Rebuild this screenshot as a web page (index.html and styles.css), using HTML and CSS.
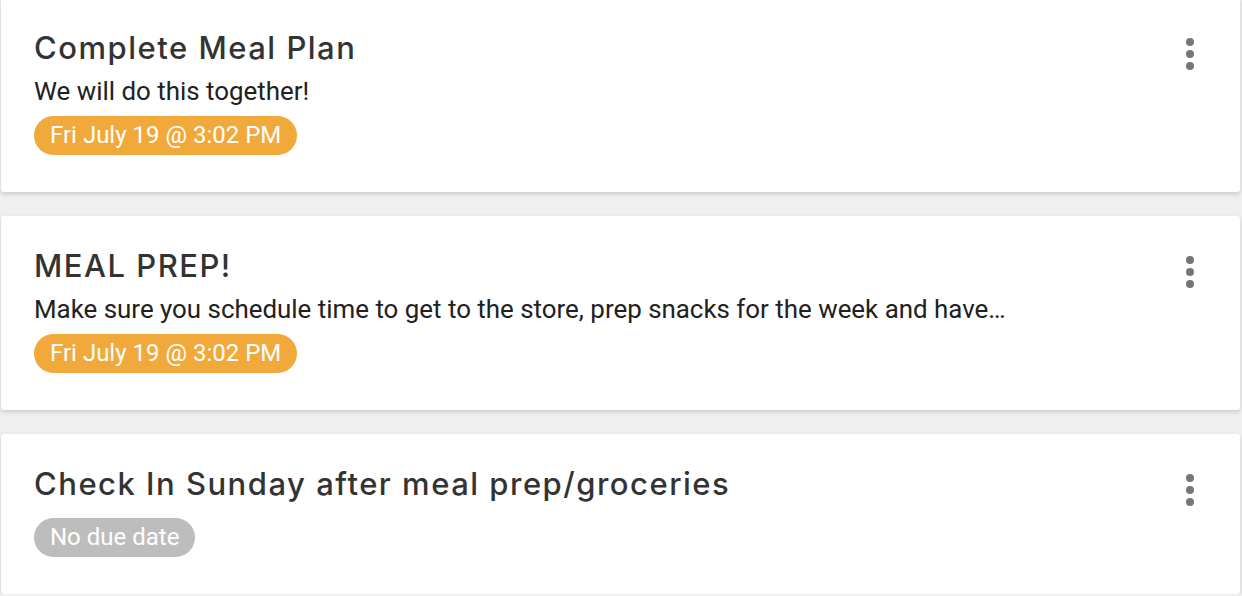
FILE: index.html
```html
<!DOCTYPE html>
<html lang="en">
  <head>
    <meta charset="UTF-8" />
    <meta name="viewport" content="width=device-width, initial-scale=1.0" />
    <title>Tasks</title>
    <link rel="stylesheet" href="styles.css">
  </head>
  <body>
    <div class="task-list">
      <div class="task-card">
        <div class="task-body">
          <h2 class="task-title">Complete Meal Plan</h2>
          <p class="task-desc">We will do this together!</p>
          <span class="due due-set">Fri July 19 @ 3:02 PM</span>
        </div>
        <button class="task-menu" aria-label="More">
          <svg width="8" height="32" viewBox="0 0 8 32"><circle cx="4" cy="4" r="4"/><circle cx="4" cy="16" r="4"/><circle cx="4" cy="28" r="4"/></svg>
        </button>
      </div>
      <div class="task-card">
        <div class="task-body">
          <h2 class="task-title">MEAL PREP!</h2>
          <p class="task-desc">Make sure you schedule time to get to the store, prep snacks for the week and have…</p>
          <span class="due due-set">Fri July 19 @ 3:02 PM</span>
        </div>
        <button class="task-menu" aria-label="More">
          <svg width="8" height="32" viewBox="0 0 8 32"><circle cx="4" cy="4" r="4"/><circle cx="4" cy="16" r="4"/><circle cx="4" cy="28" r="4"/></svg>
        </button>
      </div>
      <div class="task-card">
        <div class="task-body">
          <h2 class="task-title">Check In Sunday after meal prep/groceries</h2>
          <span class="due due-none">No due date</span>
        </div>
        <button class="task-menu" aria-label="More">
          <svg width="8" height="32" viewBox="0 0 8 32"><circle cx="4" cy="4" r="4"/><circle cx="4" cy="16" r="4"/><circle cx="4" cy="28" r="4"/></svg>
        </button>
      </div>
    </div>
  </body>
</html>
```

FILE: styles.css
```css
body {
  margin: 0;
  background-color: #efefef;
  font-family: Roboto, "Liberation Sans", sans-serif;
  overflow: hidden;
}
.task-list {
  display: flex;
  flex-direction: column;
  gap: 24px;
  margin-top: -2px;
  padding: 0 2px 0 1px;
}
.task-card {
  display: flex;
  justify-content: space-between;
  background-color: #fff;
  border-radius: 3px;
  box-shadow: 0 2px 4px rgba(0, 0, 0, 0.16);
  padding: 30px 46px 37px 33px;
}
.task-body {
  display: flex;
  flex-direction: column;
  align-items: flex-start;
}
.task-title {
  margin: 0;
  font-family: Inter, "Open Sans", sans-serif;
  font-weight: 500;
  font-size: 31px;
  line-height: 40px;
  letter-spacing: 1.5px;
  color: #333;
}
.task-desc {
  margin: 8px 0 0;
  font-size: 25.9px;
  line-height: 30px;
  color: #212121;
}
.due {
  display: inline-block;
  margin-top: 10px;
  padding: 0 16px;
  height: 39px;
  line-height: 39px;
  border-radius: 20px;
  color: #fff;
  font-size: 24px;
}
.due-set { background-color: #f2a93b; }
.due-none { background-color: #bdbdbd; margin-top: 14px; }
.task-menu {
  align-self: flex-start;
  margin-top: 10px;
  padding: 0;
  border: none;
  background: none;
  fill: #757575;
  cursor: pointer;
}
```
